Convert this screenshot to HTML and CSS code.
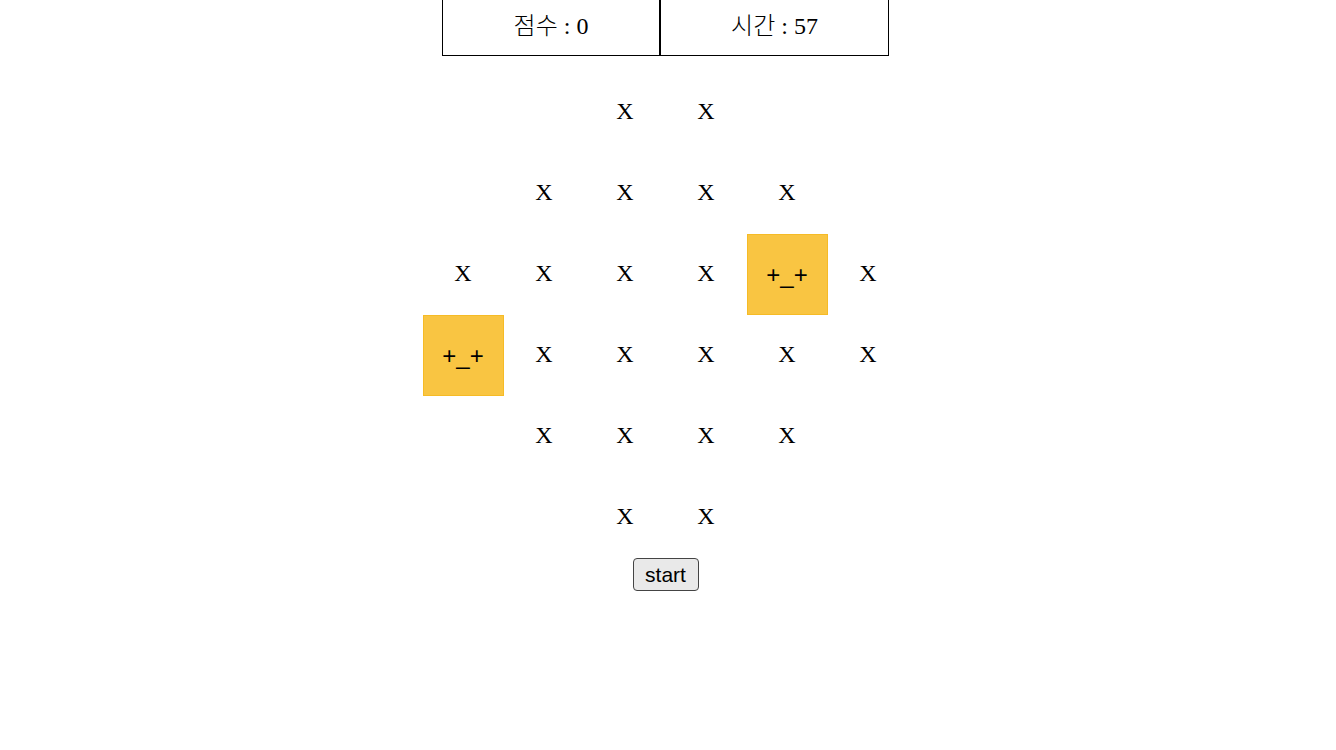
FILE: index.html
```html
<!DOCTYPE html>
<html lang="ko">
<head>
<meta charset="utf-8">
<title>게임</title>
<link rel="stylesheet" href="styles.css">
</head>
<body>
<div class="page">
  <div class="header">
    <div class="stat stat-score">점수 : 0</div>
    <div class="stat stat-time">시간 : 57</div>
  </div>
  <div class="board">
    <div class="cell"></div><div class="cell"></div><div class="cell">X</div><div class="cell">X</div><div class="cell"></div><div class="cell"></div>
    <div class="cell"></div><div class="cell">X</div><div class="cell">X</div><div class="cell">X</div><div class="cell">X</div><div class="cell"></div>
    <div class="cell">X</div><div class="cell">X</div><div class="cell">X</div><div class="cell">X</div><div class="cell mole">+_+</div><div class="cell">X</div>
    <div class="cell mole">+_+</div><div class="cell">X</div><div class="cell">X</div><div class="cell">X</div><div class="cell">X</div><div class="cell">X</div>
    <div class="cell"></div><div class="cell">X</div><div class="cell">X</div><div class="cell">X</div><div class="cell">X</div><div class="cell"></div>
    <div class="cell"></div><div class="cell"></div><div class="cell">X</div><div class="cell">X</div><div class="cell"></div><div class="cell"></div>
  </div>
  <div class="controls">
    <button class="start-btn" type="button">start</button>
  </div>
</div>
</body>
</html>
```

FILE: styles.css
```css
html, body {
  margin: 0;
  padding: 0;
  background: #ffffff;
}

.page {
  padding-right: 5px;
  display: flex;
  flex-direction: column;
  align-items: center;
  font-family: "Liberation Serif", "Noto Sans CJK KR", serif;
  color: #000;
}

.header {
  display: flex;
  margin-top: -10px;
}

.stat {
  box-sizing: border-box;
  height: 66px;
  border: 1px solid #000;
  display: flex;
  align-items: center;
  justify-content: center;
  font-size: 24px;
  font-weight: 300;
}

.stat-score {
  width: 218px;
}

.stat-time {
  width: 229px;
}

.board {
  margin-top: 16px;
  display: grid;
  grid-template-columns: repeat(6, 81px);
  grid-template-rows: repeat(6, 81px);
}

.cell {
  box-sizing: border-box;
  display: flex;
  align-items: center;
  justify-content: center;
  font-size: 24px;
  padding-bottom: 2px;
}

.mole {
  background: #f9c542;
  border: 1px solid #f6bb26;
  font-family: "Liberation Sans", Arial, sans-serif;
  font-size: 24px;
  padding-bottom: 0;
}

.controls {
  display: flex;
  justify-content: center;
}

.start-btn {
  box-sizing: border-box;
  height: 33px;
  width: 66px;
  padding: 0;
  font-family: "Liberation Sans", Arial, sans-serif;
  font-size: 21px;
  color: #000;
  background: #e9e9e9;
  border: 1px solid #444;
  border-radius: 4px;
}
```
